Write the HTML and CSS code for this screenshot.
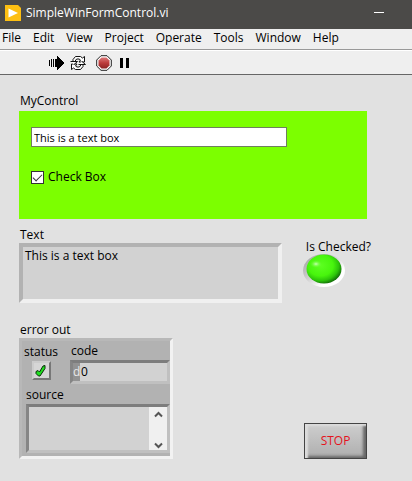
FILE: index.html
```html
<!DOCTYPE html>
<html lang="en">
<head>
<meta charset="utf-8">
<title>SimpleWinFormControl.vi</title>
<link rel="stylesheet" href="styles.css">
</head>
<body>
<header class="titlebar">
  <svg class="app-icon" width="16" height="16" viewBox="0 0 16 16" aria-hidden="true"><path d="M0 0h13l3 3v13H0z" fill="#fdbf12"/><path d="M3.500 3.500 13 8l-9.500 4.500z" fill="#fff"/></svg>
  <h1 class="title">SimpleWinFormControl.vi</h1>
  <button class="minimize" type="button" aria-label="Minimize"><span class="dash"></span></button>
</header>
<nav class="menubar">
  <a href="#file">File</a><a href="#edit">Edit</a><a href="#view">View</a><a href="#project">Project</a><a href="#operate">Operate</a><a href="#tools">Tools</a><a href="#window">Window</a><a href="#help">Help</a>
</nav>
<div class="toolbar">
  <button class="tool" type="button" aria-label="Run"><svg width="16" height="16" viewBox="0 0 16 16" shape-rendering="crispEdges"><path d="M1 5h1v6H1zM3 4h1v8H3zM5 4h1v8H5zM7 4h3v8H7z"/><path d="M9 1h1v1h1v1h1v1h1v1h1v1h1v1h1v2h-1v1h-1v1h-1v1h-1v1h-1v1h-1v1H9z"/></svg></button>
  <button class="tool" type="button" aria-label="Run Continuously"><svg width="16" height="16" viewBox="0 0 16 16" fill="#fff" stroke="#111" stroke-width="1" stroke-linejoin="round"><path d="M3 6.500V4.500l2.500-3h5L12.500 3 14.500 1.500v5.500H9L10.500 5 9 4H7L5.500 5v1.500"/><path d="M13 9.500v2l-2.500 3h-5L3.500 13l-2 1.500V9H7L5.500 11 7 12h2l1.500-1V9.500"/><path d="M.5 6.500h7L4 9.500M8.500 9.500h7L12 6.500"/></svg></button>
  <button class="tool tool-abort" type="button" aria-label="Abort"><svg width="16" height="16" viewBox="0 0 16 16"><defs><linearGradient id="abort" x1="0" y1="0" x2="0" y2="1"><stop offset="0" stop-color="#dc7777"/><stop offset=".5" stop-color="#bc3b3b"/><stop offset="1" stop-color="#8e2424"/></linearGradient></defs><path d="M5 .7h6L15.300 5v6L11 15.300H5L.7 11V5z" fill="#fff" stroke="#222"/><path d="M5.500 2.500h5l3 3v5l-3 3h-5l-3-3v-5z" fill="url(#abort)"/></svg></button>
  <button class="tool" type="button" aria-label="Pause"><svg width="16" height="16" viewBox="0 0 16 16" shape-rendering="crispEdges"><path d="M2 3h3v10H2zM8 3h3v10H8z"/></svg></button>
</div>
<main class="panel">
  <section class="control">
    <h2 class="label">MyControl</h2>
    <div class="form">
      <input class="textbox" type="text" value="This is a text box" aria-label="Text box">
      <label class="check"><input class="checkbox" type="checkbox" checked>Check Box</label>
    </div>
  </section>
  <section class="row outputs">
    <div class="text-out">
      <label class="label" for="text">Text</label>
      <textarea class="indicator" id="text" readonly>This is a text box</textarea>
    </div>
    <div class="led-out">
      <span class="led-label" id="led-label">Is Checked?</span>
      <svg class="led" width="44" height="36" viewBox="0 0 44 36" role="img" aria-labelledby="led-label">
        <defs>
          <linearGradient id="rim" x1="0" y1="0" x2="1" y2="1"><stop offset=".12" stop-color="#aaa"/><stop offset=".45" stop-color="#d2d2d2"/><stop offset=".7" stop-color="#fff"/></linearGradient>
          <radialGradient id="lamp" cx=".4" cy=".38" r=".65"><stop offset="0" stop-color="#5dff21"/><stop offset=".55" stop-color="#48f50d"/><stop offset=".8" stop-color="#2dc50a"/><stop offset="1" stop-color="#126b08"/></radialGradient>
          <radialGradient id="shine"><stop offset="0" stop-color="#c9ffb6"/><stop offset="1" stop-color="#5dff21" stop-opacity="0"/></radialGradient>
        </defs>
        <ellipse cx="21" cy="16.500" rx="21" ry="16.500" fill="url(#rim)"/>
        <ellipse cx="21" cy="15" rx="17.500" ry="14.500" fill="url(#lamp)"/>
        <ellipse cx="13" cy="10" rx="6" ry="4" fill="url(#shine)"/>
      </svg>
    </div>
  </section>
  <section class="row errors">
    <div class="error-out">
      <h2 class="label">error out</h2>
      <div class="cluster">
        <div class="cluster-top">
          <div class="status">
            <span class="status-label">status</span>
            <button class="status-ok" type="button" aria-label="No error"><svg width="13" height="14" viewBox="0 0 13 14"><path d="M2 7.500 4 6.500 5.500 8 9 2l2-.5v3L6 12H4.500L2 9.500z" fill="#1fe01f" stroke="#0b2b0b" stroke-linejoin="round"/></svg></button>
          </div>
          <div class="code">
            <label class="label" for="code">code</label>
            <div class="well code-field"><span class="radix">d</span><input class="code-value" id="code" type="text" value="0" readonly></div>
          </div>
        </div>
        <label class="source-label" for="source">source</label>
        <div class="well source-field">
          <textarea class="source" id="source" readonly></textarea>
          <div class="scroll">
            <svg width="9" height="7" viewBox="0 0 9 7"><path d="M1 5.500 4.500 2 8 5.500" fill="none" stroke="#555" stroke-width="2"/></svg>
            <svg width="9" height="7" viewBox="0 0 9 7"><path d="M1 1.500 4.500 5 8 1.500" fill="none" stroke="#555" stroke-width="2"/></svg>
          </div>
        </div>
      </div>
    </div>
    <button class="stop" type="button">STOP</button>
  </section>
</main>
</body>
</html>
```
FILE: styles.css
```css
* { box-sizing: border-box; }

body {
  margin: 0;
  min-height: 100vh;
  background: #e1e1e1;
  color: #000;
  font: 12px/16px "Open Sans", "Noto Sans", sans-serif;
}

h1, h2 { margin: 0; font: inherit; }
button, input, textarea { margin: 0; padding: 0; border: 0; border-radius: 0; color: inherit; font: inherit; }
svg { display: block; }

.titlebar {
  display: flex;
  align-items: center;
  height: 29px;
  padding: 0 24px 4px 5px;
  background: #4b4a48;
  color: #fff;
}
.title { flex: 1; margin-left: 5px; }
.minimize { padding: 8px 4px; background: none; }
.dash { display: block; width: 10px; height: 1px; background: #fff; }

.menubar {
  display: flex;
  gap: 12px;
  height: 21px;
  padding: 1px 2px;
  background: #efefef;
  border-bottom: 1px solid #999;
}
.menubar a { color: #000; text-decoration: none; }

.toolbar {
  display: flex;
  align-items: center;
  gap: 6px;
  height: 25px;
  padding-left: 48px;
  background: #efefef;
  border-top: 1px solid #fff;
  border-bottom: 1px solid #666;
}
.tool { background: none; }
.tool-abort { margin-left: 4px; }

.panel { padding: 18px 45px 20px 19px; }
.label { display: block; padding-left: 1px; }
.row { display: flex; justify-content: space-between; }

.form {
  display: flex;
  flex-direction: column;
  align-items: flex-start;
  gap: 22px;
  height: 108px;
  margin-top: 2px;
  padding: 16px 12px;
  background: #7cff00;
}
.textbox {
  width: 79%;
  height: 20px;
  padding: 0 2px;
  border: 1px solid #6f7f5f;
  background: #fff;
  font-size: 11px;
}
.check { display: flex; align-items: center; gap: 4px; }
.checkbox {
  width: 13px;
  height: 13px;
  appearance: none;
  border: 1px solid #333;
  background: #fff;
}
.checkbox:checked::before {
  content: "";
  display: block;
  width: 8px;
  height: 4px;
  margin: 2px 1px;
  border: solid #333;
  border-width: 0 0 1px 1px;
  transform: rotate(-45deg);
}

.outputs { gap: 21px; margin-top: 8px; }
.text-out { flex: 1; }
.indicator {
  display: block;
  width: 100%;
  height: 60px;
  padding: 1px 2px;
  border: 4px solid;
  border-color: #b2b2b2 #f0f0f0 #f0f0f0 #b2b2b2;
  background: #d2d2d2;
  resize: none;
  outline: 0;
}
.led-out { padding-top: 13px; margin-right: -4px; }
.led-label { display: block; padding-left: 3px; line-height: 14px; }

.errors { align-items: flex-end; margin-top: 19px; }
.cluster {
  width: 154px;
  height: 121px;
  padding: 2px 0 0 4px;
  border: 3px solid;
  border-color: #b8b8b8 #f2f2f2 #f2f2f2 #b8b8b8;
  background: #b2b2b2;
}
.cluster-top { display: flex; gap: 12px; }
.status { display: flex; flex-direction: column; align-items: center; margin-left: -2px; }
.status-label { line-height: 18px; }
.status-ok {
  width: 19px;
  height: 19px;
  border: 2px solid;
  border-color: #ccc #777 #777 #ccc;
  background: #d6d6d6;
}
.code { flex: 1; min-width: 0; }
.well {
  display: flex;
  border: 3px solid;
  border-color: #7d7d7d #c0c0c0 #c0c0c0 #858585;
  background: #d2d2d2;
}
.code-field { height: 24px; margin-top: 1px; }
.radix { width: 7px; background: #929292; color: #e8e8e8; line-height: 18px; text-align: right; }
.code-value { flex: 1; min-width: 0; padding-left: 1px; background: none; }
.source-label { display: block; margin-top: 2px; line-height: 18px; }
.source-field { height: 49px; }
.source { flex: 1; min-width: 0; height: 100%; background: none; resize: none; outline: 0; }
.scroll {
  display: flex;
  flex-direction: column;
  justify-content: space-between;
  align-items: center;
  width: 18px;
  padding: 4px 0 1px;
  background: #f0f0f0;
}

.stop {
  width: 63px;
  height: 36px;
  border: 1px solid #444;
  background: linear-gradient(#cecece, #aeaeae);
  box-shadow: inset 3px 2px 2px #dcdcdc, inset -3px -2px 3px #666;
  color: #e5131d;
}
```
